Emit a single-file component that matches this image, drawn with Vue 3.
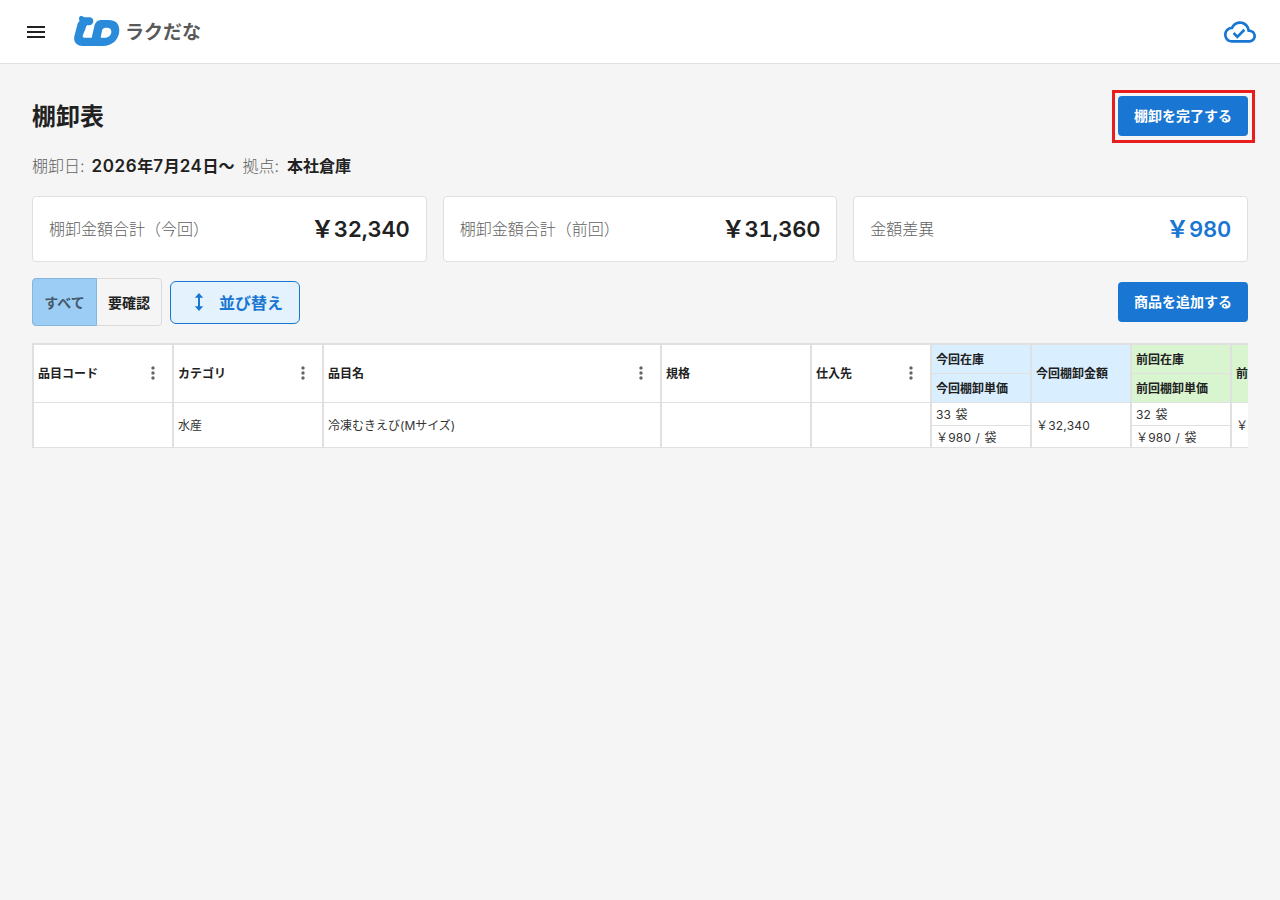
<template>
  <div class="app">
    <header class="header">
      <button class="menu" type="button" aria-label="menu">
        <svg width="24" height="24" viewBox="0 0 24 24"><path d="M3 18h18v-2H3v2zm0-5h18v-2H3v2zm0-7v2h18V6H3z" /></svg>
      </button>
      <div class="logo">
        <svg width="46" height="32" viewBox="222 48 138 96">
          <path
            fill="#2b8bdb"
            fill-rule="evenodd"
            d="M239 63C234 55 239 46 245 48C249 49 251 51 254 52L268 52C275 52 280 57 280 63C280 71 273 76 267 76C265 76 263 75 262 75C258 79 257 83 256 88L249 104C247 110 248 113 253 113L275 113L283 79C286 66 293 60 305 60L326 60C346 60 358 71 358 90C358 117 338 138 308 138L249 138C230 138 220 127 223 109L232 74C233 70 235 66 239 63ZM317 83C310 83 307 87 306 92L302 113L314 113C326 113 334 105 334 95C334 87 329 83 321 83Z"
          />
        </svg>
        <span class="logo-text">ラクだな</span>
      </div>
      <svg class="cloud" width="32" height="32" viewBox="0 0 24 24">
        <path d="M19.350 10.040C18.670 6.590 15.640 4 12 4 9.110 4 6.600 5.640 5.350 8.040 2.340 8.360 0 10.910 0 14c0 3.310 2.690 6 6 6h13c2.760 0 5-2.240 5-5 0-2.640-2.050-4.780-4.650-4.960zM19 18H6c-2.210 0-4-1.790-4-4 0-2.050 1.530-3.760 3.560-3.970l1.070-.11.500-.95C8.080 7.140 9.940 6 12 6c2.620 0 4.880 1.860 5.390 4.430l.3 1.500 1.530.11c1.560.1 2.780 1.410 2.780 2.960 0 1.650-1.350 3-3 3zm-9-3.820l-2.090-2.090L6.500 13.500 10 17l6.010-6.010-1.410-1.410z" />
      </svg>
    </header>

    <main class="main">
      <div class="title-row">
        <h1>棚卸表</h1>
        <div class="highlight">
          <button class="btn" type="button">棚卸を完了する</button>
        </div>
      </div>

      <div class="info">
        <span class="label">棚卸日:</span>
        <strong class="date"><span v-for="(part, i) in dateParts" :key="i" :class="{ num: /\d/.test(part) }">{{ part }}</span></strong>
        <span class="label">拠点:</span>
        <strong>本社倉庫</strong>
      </div>

      <div class="cards">
        <div v-for="card in cards" :key="card.label" class="card">
          <span class="label">{{ card.label }}</span>
          <span class="amount" :class="{ blue: card.blue }"><span class="yen">￥</span>{{ card.amount }}</span>
        </div>
      </div>

      <div class="toolbar">
        <div class="toggle">
          <button
            v-for="f in filters"
            :key="f"
            type="button"
            :class="{ active: f === filter }"
            @click="filter = f"
          >{{ f }}</button>
        </div>
        <button class="sort" type="button">
          <svg width="12" height="20" viewBox="0 0 12 20"><path d="M6 1 10.200 5.800H7V14.200H10.200L6 19 1.800 14.200H5V5.800H1.800z" /></svg>
          <span>並び替え</span>
        </button>
        <button class="btn add" type="button">商品を追加する</button>
      </div>

      <div class="table">
        <div class="row head">
          <div v-for="col in columns" :key="col.key" class="cell" :class="[col.key, col.color]">
            <template v-if="col.sub">
              <div class="half">{{ col.label }}</div>
              <div class="half">{{ col.sub }}</div>
            </template>
            <template v-else>
              <span>{{ col.label }}</span>
              <svg v-if="col.menu" class="dots" width="20" height="20" viewBox="0 0 24 24"><path d="M12 8c1.100 0 2-.9 2-2s-.9-2-2-2-2 .9-2 2 .9 2 2 2zm0 2c-1.100 0-2 .9-2 2s.9 2 2 2 2-.9 2-2-.9-2-2-2zm0 6c-1.100 0-2 .9-2 2s.9 2 2 2 2-.9 2-2-.9-2-2-2z" /></svg>
            </template>
          </div>
        </div>
        <div v-for="(item, i) in items" :key="i" class="row body">
          <div v-for="col in columns" :key="col.key" class="cell" :class="col.key">
            <template v-if="col.sub">
              <div class="half">{{ item[col.key][0] }}</div>
              <div class="half">{{ item[col.key][1] }}</div>
            </template>
            <span v-else>{{ item[col.key] }}</span>
          </div>
        </div>
      </div>
    </main>
  </div>
</template>

<script setup>
import { ref } from 'vue'

const filters = ['すべて', '要確認']
const filter = ref('すべて')

const dateParts = '2026年7月24日〜'.match(/\d+|\D+/g)

const cards = [
  { label: '棚卸金額合計（今回）', amount: '32,340' },
  { label: '棚卸金額合計（前回）', amount: '31,360' },
  { label: '金額差異', amount: '980', blue: true },
]

const columns = [
  { key: 'code', label: '品目コード', menu: true },
  { key: 'category', label: 'カテゴリ', menu: true },
  { key: 'name', label: '品目名', menu: true },
  { key: 'spec', label: '規格' },
  { key: 'supplier', label: '仕入先', menu: true },
  { key: 'stock', label: '今回在庫', sub: '今回棚卸単価', color: 'now' },
  { key: 'total', label: '今回棚卸金額', color: 'now' },
  { key: 'prevStock', label: '前回在庫', sub: '前回棚卸単価', color: 'prev' },
  { key: 'prevTotal', label: '前回棚卸金額', color: 'prev' },
]

const items = [
  {
    code: '',
    category: '水産',
    name: '冷凍むきえび(Mサイズ)',
    spec: '',
    supplier: '',
    stock: ['33 袋', '￥980 / 袋'],
    total: '￥32,340',
    prevStock: ['32 袋', '￥980 / 袋'],
    prevTotal: '￥31,360',
  },
]
</script>

<style>
body {
  background: #f5f5f5;
}
</style>

<style scoped>
.app {
  min-height: 900px;
  background: #f5f5f5;
  color: #212121;
  font-family: Inter, "Noto Sans CJK JP", sans-serif;
  font-size: 16px;
}
.app * {
  box-sizing: border-box;
}
button {
  font-family: inherit;
  padding: 0;
  cursor: pointer;
}
.header {
  height: 64px;
  background: #fff;
  border-bottom: 1px solid #e0e0e0;
  display: flex;
  align-items: center;
  padding: 0 24px;
  box-sizing: border-box;
}
.menu {
  border: 0;
  background: none;
  width: 24px;
  height: 24px;
}
.menu svg {
  display: block;
  fill: #212121;
}
.logo {
  display: flex;
  align-items: center;
  margin-left: 26px;
}
.logo svg {
  display: block;
}
.logo-text {
  margin-left: 5px;
  padding-top: 3px;
  font-size: 19px;
  font-weight: 700;
  line-height: 32px;
  color: #595959;
}
.cloud {
  margin-left: auto;
  fill: #1976d2;
}

.main {
  padding: 26px 32px 0;
}
.title-row {
  display: flex;
  align-items: center;
  justify-content: space-between;
  height: 53px;
}
h1 {
  margin: 0;
  font-size: 24px;
  font-weight: 700;
  line-height: 36px;
}
.highlight {
  border: 3px solid #e81e1e;
  padding: 3px 4px 4px 3px;
  margin-right: -7px;
}
.btn {
  display: block;
  width: 130px;
  height: 40px;
  border: 0;
  border-radius: 4px;
  background: #1976d2;
  color: #fff;
  font-size: 14px;
  font-weight: 600;
  padding-bottom: 2px;
}
.info {
  display: flex;
  align-items: center;
  gap: 8px;
  height: 24px;
  margin-top: 11px;
  line-height: 24px;
}
.label {
  color: #616161;
  font-weight: 300;
}
.info strong {
  font-weight: 600;
}
.info .date {
  margin-left: -1px;
}
.num {
  font-size: 17px;
  letter-spacing: 0.600px;
}
.cards {
  display: grid;
  grid-template-columns: repeat(3, 1fr);
  gap: 16px;
  margin-top: 18px;
}
.card {
  display: flex;
  align-items: center;
  justify-content: space-between;
  height: 66px;
  padding: 0 16px 2px;
  background: #fff;
  border: 1px solid #e0e0e0;
  border-radius: 4px;
}
.amount {
  padding-bottom: 2px;
  font-size: 22px;
  font-weight: 600;
  font-feature-settings: "tnum";
  letter-spacing: -0.200px;
}
.yen {
  font-size: 23px;
}
.blue {
  color: #1976d2;
}

.toolbar {
  display: flex;
  align-items: center;
  height: 48px;
  margin-top: 16px;
}
.toggle {
  display: flex;
  height: 48px;
  width: 130px;
  border: 1px solid #dadada;
  border-radius: 4px;
}
.toggle button {
  flex: 1;
  border: 0;
  padding-bottom: 1px;
  background: none;
  color: #212121;
  font-size: 14px;
  font-weight: 600;
}
.toggle .active {
  flex: 0 0 65px;
  margin: -1px 0 -1px -1px;
  border: 1px solid #84b6e2;
  border-radius: 4px 0 0 4px;
  background: #9ccdf5;
  color: #46596a;
}
.sort {
  display: flex;
  align-items: center;
  justify-content: center;
  gap: 14px;
  width: 130px;
  height: 43px;
  margin-left: 8px;
  padding: 0 0 1px 6px;
  border: 1px solid #1976d2;
  border-radius: 6px;
  background: #e3f2fd;
  color: #1976d2;
  font-size: 16px;
  font-weight: 600;
}
.sort svg {
  fill: #1976d2;
}
.add {
  margin-left: auto;
}

.table {
  margin-top: 17px;
  border-top: 2px solid #e0e0e0;
  border-left: 2px solid #e0e0e0;
  overflow: hidden;
  font-size: 12px;
}
.row {
  display: flex;
  width: max-content;
  background: #fff;
  border-bottom: 1px solid #e0e0e0;
}
.head {
  height: 58px;
  font-weight: 600;
}
.head .cell > span {
  padding-bottom: 1px;
}
.body {
  height: 45px;
  color: #333;
  font-weight: 400;
}
.cell {
  display: flex;
  align-items: center;
  justify-content: space-between;
  width: 100px;
  padding: 0 9px 1px 4px;
  border-right: 2px solid #e0e0e0;
  white-space: nowrap;
}
.code {
  width: 140px;
}
.category,
.spec {
  width: 150px;
}
.name {
  width: 338px;
}
.supplier {
  width: 120px;
}
.stock,
.prevStock {
  flex-direction: column;
  align-items: stretch;
  padding: 0;
}
.half {
  flex: 1;
  display: flex;
  align-items: center;
  padding: 0 0 1px 4px;
}
.half + .half {
  border-top: 1px solid #e0e0e0;
}
.body .half:first-child {
  padding-bottom: 2px;
}
.body .stock,
.body .prevStock,
.body .total {
  letter-spacing: 0.200px;
  word-spacing: 0.800px;
}
.body .total,
.body .prevTotal {
  padding-bottom: 2px;
}
.now {
  background: #d9eeff;
}
.prev {
  background: #d9f5d0;
}
.dots {
  fill: #666;
}
</style>
